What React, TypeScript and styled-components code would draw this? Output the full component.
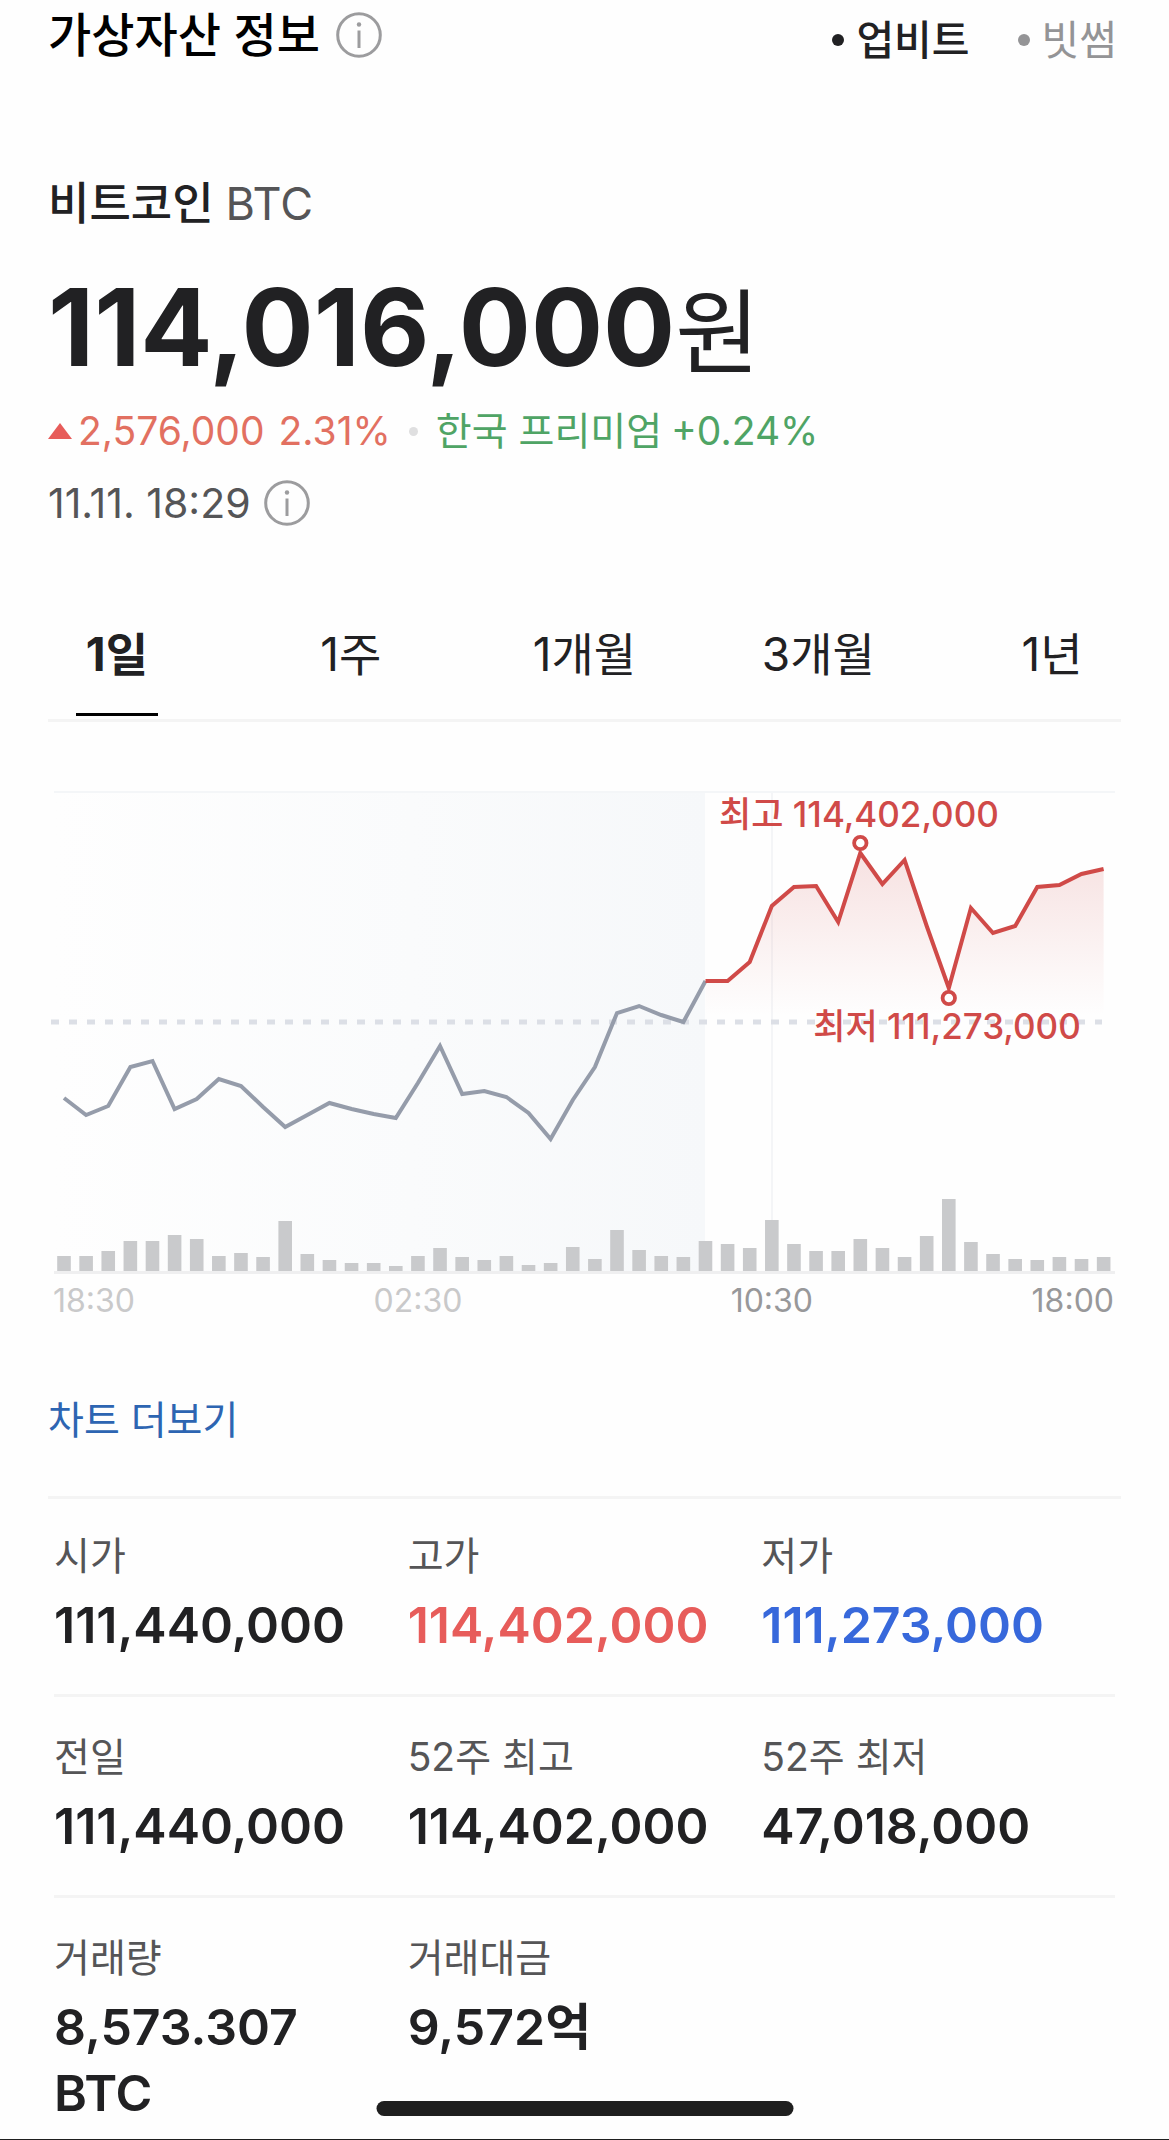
import React, { useState } from 'react';
import styled, { createGlobalStyle } from 'styled-components';

const GlobalStyle = createGlobalStyle`
  *, *::before, *::after { box-sizing: border-box; }
  body {
    margin: 0;
    background: #fefefe;
    color: #212123;
    font-family: Inter, "Noto Sans CJK KR", sans-serif;
  }
  button {
    margin: 0;
    padding: 0;
    border: 0;
    background: none;
    color: inherit;
    font: inherit;
    cursor: pointer;
  }
`;

const Page = styled.main`
  display: flex;
  flex-direction: column;
  min-height: 100vh;
  padding-top: 7px;
  border-bottom: 1px solid #1f1f1f;
`;

const Header = styled.header`
  display: flex;
  align-items: flex-end;
  justify-content: space-between;
  padding: 0 52px 0 48px;
`;

const TitleRow = styled.div`
  display: flex;
  align-items: center;
  gap: 16px;
`;

const Title = styled.h1`
  margin: 0;
  color: #000;
  font-size: 47px;
  font-weight: 500;
  line-height: 56px;
`;

const InfoButton = styled.button`
  display: flex;
  svg { display: block; }
`;

const Exchanges = styled.div`
  display: flex;
  gap: 48px;
`;

const ExchangeButton = styled.button<{ $active: boolean }>`
  display: flex;
  align-items: center;
  gap: 12px;
  color: ${(p) => (p.$active ? '#212123' : '#949496')};
  font-size: 41px;
  font-weight: ${(p) => (p.$active ? 500 : 400)};
  line-height: 46px;

  &::before {
    content: '';
    width: 12px;
    height: 12px;
    border-radius: 50%;
    background: currentColor;
  }
`;

const Summary = styled.section`
  display: flex;
  flex-direction: column;
  padding: 113px 48px 0;
`;

const CoinName = styled.h2`
  display: flex;
  gap: 12px;
  margin: 0;
  font-size: 45px;
  font-weight: 500;
  line-height: 56px;
`;

const Ticker = styled.span`
  color: #555557;
  font-weight: 400;
`;

const Price = styled.p`
  margin: 35px 0 18px;
  font-size: 107px;
  font-weight: 700;
  line-height: 120px;
`;

const Unit = styled.span`
  font-size: 92px;
  font-weight: 400;
  line-height: 1;
`;

const MetaRow = styled.div`
  display: flex;
  align-items: center;
  font-size: 39px;
  line-height: 52px;
`;

const Change = styled.span`
  display: flex;
  align-items: center;
  gap: 14px;
  color: #e27061;
`;

const UpMark = styled.svg`
  width: 24px;
  height: 16px;
  margin-right: -8px;
`;

const Separator = styled.span`
  width: 9px;
  height: 9px;
  margin: 0 18px;
  border-radius: 50%;
  background: #dfdfe0;
`;

const Premium = styled.span`
  display: flex;
  gap: 9px;
  color: #4fa465;
`;

const Updated = styled(MetaRow)`
  gap: 13px;
  margin-top: 20px;
  color: #555557;
  font-size: 41px;
`;

const Tabs = styled.div`
  display: grid;
  grid-template-columns: repeat(5, 1fr);
  justify-items: center;
  margin-top: 97px;
`;

const Tab = styled.button<{ $active: boolean }>`
  min-width: 82px;
  padding-bottom: 31px;
  border-bottom: 3px solid ${(p) => (p.$active ? '#000' : 'transparent')};
  font-size: 46px;
  font-weight: ${(p) => (p.$active ? 700 : 400)};
  line-height: 56px;
`;

const Rule = styled.hr`
  width: auto;
  height: 3px;
  margin: 3px 48px 0;
  border: 0;
  background: #f4f4f4;
`;

const ChartSvg = styled.svg`
  display: block;
  width: 100%;
  height: auto;
  margin-top: 58px;
`;

const ChartLabel = styled.text`
  fill: #d04a48;
  font-size: 35px;
  font-weight: 500;
`;

const TimeLabel = styled.text<{ $dim: boolean }>`
  fill: ${(p) => (p.$dim ? '#c9c9ca' : '#98989a')};
  font-size: 32px;
`;

const MoreLink = styled.a`
  align-self: flex-start;
  margin: 64px 48px 47px;
  color: #2d65b2;
  font-size: 39px;
  line-height: 52px;
  text-decoration: none;
`;

const Stats = styled.div`
  display: flex;
  flex-direction: column;
  padding: 0 54px;
`;

const StatRow = styled.dl`
  display: grid;
  grid-template-columns: repeat(3, 1fr);
  margin: 0;
  padding: 34px 0 36px;
  border-bottom: 3px solid #f4f4f4;

  &:first-child { padding-top: 31px; }
  &:last-child {
    padding-bottom: 13px;
    border-bottom: 0;
  }
`;

const Stat = styled.div`
  display: flex;
  flex-direction: column;
  gap: 10px;
`;

const StatLabel = styled.dt`
  color: #555557;
  font-size: 39px;
  line-height: 52px;
`;

const StatValue = styled.dd<{ $color?: string }>`
  max-width: 320px;
  margin: 0;
  color: ${(p) => p.$color ?? '#212123'};
  font-size: 50px;
  font-weight: 600;
  line-height: 66px;
`;

const HomeIndicator = styled.div`
  position: fixed;
  bottom: 24px;
  left: 50%;
  width: 417px;
  height: 15px;
  border-radius: 8px;
  background: #1f1f1f;
  transform: translateX(-50%);
`;

const InfoIcon = () => (
  <svg width="46" height="46" viewBox="0 0 46 46" fill="none" aria-hidden="true">
    <circle cx="23" cy="23" r="21.3" stroke="#9c9c9e" strokeWidth="3" />
    <circle cx="23" cy="12.5" r="2.2" fill="#9c9c9e" />
    <path d="M23 18.5V36" stroke="#9c9c9e" strokeWidth="3" />
  </svg>
);

/* Half-hourly prices, as heights inside the chart's own coordinate space. */
const prices = [
  318, 335, 326, 287, 281, 329, 319, 299, 306, 327, 347, 335, 323, 329, 334, 338,
  303, 266, 314, 311, 317, 333, 359, 320, 287, 233, 226, 235, 242, 201, 201, 182,
  126, 107, 106, 142, 73, 104, 80, 146, 208, 128, 153, 146, 107, 105, 94, 89,
];

const volumes = [
  15, 15, 20, 30, 30, 36, 32, 15, 18, 14, 50, 17, 11, 8, 8, 5,
  15, 23, 14, 11, 15, 6, 8, 24, 12, 41, 21, 15, 14, 30, 27, 23,
  51, 27, 20, 20, 32, 23, 14, 35, 72, 29, 17, 12, 11, 14, 12, 14,
];

const TODAY = 29;
const BASE = 491;
const xAt = (i: number) => 64 + i * 22.12;
const points = (from: number, to: number) =>
  prices.slice(from, to).map((y, k) => `${xAt(from + k).toFixed(1)},${y}`).join(' ');

const PriceChart = () => (
  <ChartSvg viewBox="0 0 1169 550" role="img" aria-label="비트코인 1일 차트">
    <defs>
      <linearGradient id="previous" x1="0" x2="1" y1="0" y2="0">
        <stop offset="0" stopColor="#fefefe" />
        <stop offset="0.55" stopColor="#fafbfc" />
        <stop offset="1" stopColor="#f6f8fa" />
      </linearGradient>
      <linearGradient id="rise" gradientUnits="userSpaceOnUse" x1="0" x2="0" y1="73" y2="236">
        <stop offset="0" stopColor="#d04a48" stopOpacity="0.16" />
        <stop offset="0.8" stopColor="#d04a48" stopOpacity="0.03" />
        <stop offset="1" stopColor="#d04a48" stopOpacity="0" />
      </linearGradient>
    </defs>
    <rect x="54" y="11" width="651" height="480" fill="url(#previous)" />
    <rect x="54" y="11" width="1061" height="2" fill="#f4f6f8" />
    <rect x="771" y="13" width="2" height="478" fill="#f4f5f7" />
    <rect x="54" y="491" width="1061" height="3" fill="#efeff0" />
    {volumes.map((v, i) => (
      <rect key={i} x={xAt(i) - 6.8} y={BASE - v} width="13.6" height={v} fill="#c9cacc" />
    ))}
    <polygon
      points={`${xAt(TODAY)},242 ${points(TODAY, 48)} ${xAt(47)},242`}
      fill="url(#rise)"
    />
    <line x1="51" x2="1102" y1="242" y2="242" stroke="#dcdfe6" strokeWidth="5" strokeDasharray="8 10" />
    <polyline points={points(0, TODAY + 1)} fill="none" stroke="#959caa" strokeWidth="4" />
    <polyline points={points(TODAY, 48)} fill="none" stroke="#d04a48" strokeWidth="4" />
    <circle cx={xAt(36)} cy="63" r="6.2" fill="#fff" stroke="#d04a48" strokeWidth="3.8" />
    <circle cx={xAt(40)} cy="218" r="6.2" fill="#fff" stroke="#d04a48" strokeWidth="3.8" />
    <ChartLabel x="859" y="47" textAnchor="middle">최고 114,402,000</ChartLabel>
    <ChartLabel x="947" y="259" textAnchor="middle">최저 111,273,000</ChartLabel>
    <TimeLabel $dim x="53" y="532">18:30</TimeLabel>
    <TimeLabel $dim x={xAt(16)} y="532" textAnchor="middle">02:30</TimeLabel>
    <TimeLabel $dim={false} x={xAt(32)} y="532" textAnchor="middle">10:30</TimeLabel>
    <TimeLabel $dim={false} x="1114" y="532" textAnchor="end">18:00</TimeLabel>
  </ChartSvg>
);

type StatItem = { label: string; value: string; color?: string };

const stats: StatItem[][] = [
  [
    { label: '시가', value: '111,440,000' },
    { label: '고가', value: '114,402,000', color: '#e75c5a' },
    { label: '저가', value: '111,273,000', color: '#3768db' },
  ],
  [
    { label: '전일', value: '111,440,000' },
    { label: '52주 최고', value: '114,402,000' },
    { label: '52주 최저', value: '47,018,000' },
  ],
  [
    { label: '거래량', value: '8,573.307 BTC' },
    { label: '거래대금', value: '9,572억' },
  ],
];

const exchanges = ['업비트', '빗썸'];
const periods = ['1일', '1주', '1개월', '3개월', '1년'];

export default function App() {
  const [exchange, setExchange] = useState(exchanges[0]);
  const [period, setPeriod] = useState(periods[0]);

  return (
    <>
      <GlobalStyle />
      <Page>
        <Header>
          <TitleRow>
            <Title>가상자산 정보</Title>
            <InfoButton type="button" aria-label="가상자산 정보 안내">
              <InfoIcon />
            </InfoButton>
          </TitleRow>
          <Exchanges>
            {exchanges.map((name) => (
              <ExchangeButton
                key={name}
                type="button"
                $active={name === exchange}
                aria-pressed={name === exchange}
                onClick={() => setExchange(name)}
              >
                {name}
              </ExchangeButton>
            ))}
          </Exchanges>
        </Header>

        <Summary>
          <CoinName>
            비트코인 <Ticker>BTC</Ticker>
          </CoinName>
          <Price>
            114,016,000<Unit>원</Unit>
          </Price>
          <MetaRow>
            <Change>
              <UpMark viewBox="0 0 24 16" aria-hidden="true">
                <path d="M12 0L24 16H0Z" fill="#e75c5a" />
              </UpMark>
              <span>2,576,000</span>
              <span>2.31%</span>
            </Change>
            <Separator />
            <Premium>
              <span>한국 프리미엄</span>
              <span>+0.24%</span>
            </Premium>
          </MetaRow>
          <Updated>
            <time>11.11. 18:29</time>
            <InfoButton type="button" aria-label="시세 기준 안내">
              <InfoIcon />
            </InfoButton>
          </Updated>
        </Summary>

        <Tabs role="tablist">
          {periods.map((name) => (
            <Tab
              key={name}
              type="button"
              role="tab"
              $active={name === period}
              aria-selected={name === period}
              onClick={() => setPeriod(name)}
            >
              {name}
            </Tab>
          ))}
        </Tabs>
        <Rule />

        <PriceChart />

        <MoreLink href="#chart">차트 더보기</MoreLink>
        <Rule />

        <Stats>
          {stats.map((row, i) => (
            <StatRow key={i}>
              {row.map((item) => (
                <Stat key={item.label}>
                  <StatLabel>{item.label}</StatLabel>
                  <StatValue $color={item.color}>{item.value}</StatValue>
                </Stat>
              ))}
            </StatRow>
          ))}
        </Stats>
      </Page>
      <HomeIndicator />
    </>
  );
}
